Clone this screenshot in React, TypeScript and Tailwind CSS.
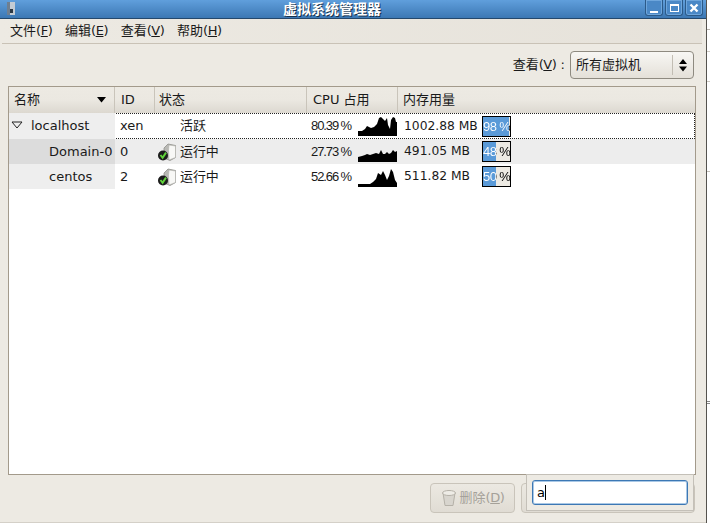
const cjk = "font-['DejaVu_Sans','Noto_Sans_CJK_SC',sans-serif]";

function Mnemonic({ k }: { k: string }) {
  return (
    <span className="tracking-[-0.4px]">
      (<span className="underline">{k}</span>)
    </span>
  );
}

function Menu({ zh, k }: { zh: string; k: string }) {
  return (
    <span className="text-[13px] text-[#1a1a1a] whitespace-nowrap">
      {zh}
      <Mnemonic k={k} />
    </span>
  );
}

function Spark({ points }: { points: string }) {
  return (
    <svg width="39" height="20" viewBox="0 0 39 20" className="block">
      <polygon points={points} fill="#000" />
    </svg>
  );
}

function ServerIcon() {
  return (
    <svg width="18" height="18" viewBox="0 0 18 18" className="block shrink-0">
      <path d="M6 5 L10 1 L17.5 2.5 L17.5 14.5 L12 17.5 L6 15 Z" fill="#b9b9b5" stroke="#8f8f8a" strokeWidth="0.8" />
      <path d="M10.5 7 L11 2 L17.5 3 L17.5 14.5 L11 17 Z" fill="#f8f8f6" stroke="#b0b0ab" strokeWidth="0.6" />
      <circle cx="5" cy="12.5" r="5" fill="#1c1c1c" />
      <path d="M2.5 12 L4.6 14.8 L8 9.6" fill="none" stroke="#5fd13a" strokeWidth="2" />
    </svg>
  );
}

function Bar({ pct, label }: { pct: number; label: string }) {
  return (
    <div
      className="w-[29px] h-[21px] border border-black text-[13px] leading-[19px] text-center whitespace-nowrap font-['Liberation_Sans',sans-serif] tracking-[-0.6px]"
      style={{ background: `linear-gradient(to right, #5a9ad8 ${pct}%, #edeae3 ${pct}%)` }}
    >
      <div
        className="bg-clip-text text-transparent"
        style={{ backgroundImage: `linear-gradient(to right, #fff ${pct}%, #000 ${pct}%)` }}
      >
        {label}
      </div>
    </div>
  );
}

const rows = [
  {
    name: "localhost", indent: "pl-[22px]", id: "xen", status: "活跃", icon: false, cpu: "80.39 %",
    mem: "1002.88 MB", pct: 96, label: "98 %",
    rowBg: "bg-white", nameBg: "bg-[#eeeeee]", h: "h-[26px]", focus: true,
    spark: "0,20 0,15 4,15 7,13 9,10 11,11 13,12 16,11 19,8 21,2 23,1 25,3 27,5 29,2 30,9 32,13 33,4 35,1 37,2 38,6 39,6 39,20",
  },
  {
    name: "Domain-0", indent: "pl-[40px]", id: "0", status: "运行中", icon: true, cpu: "27.73 %",
    mem: "491.05 MB", pct: 48, label: "48 %",
    rowBg: "bg-[#ededed]", nameBg: "bg-[#dcdcdc]", h: "h-[25px]", focus: false,
    spark: "0,20 0,15 4,14 7,13 9,12 12,13 15,12 18,11 21,12 23,8 25,12 27,12 29,10 31,12 33,11 35,8 37,10 39,9 39,20",
  },
  {
    name: "centos", indent: "pl-[40px]", id: "2", status: "运行中", icon: true, cpu: "52.66 %",
    mem: "511.82 MB", pct: 50, label: "50 %",
    rowBg: "bg-white", nameBg: "bg-[#eeeeee]", h: "h-[25px]", focus: false,
    spark: "0,20 0,17 12,17 15,15 18,12 20,6 23,8 25,4 27,8 29,13 31,9 33,2 35,5 37,13 39,16 39,20",
  },
];

const gridCols = "grid grid-cols-[106px_40px_152px_91px_1fr]";

export default function App() {
  return (
    <div className={`relative w-[710px] h-[523px] bg-white overflow-hidden flex ${cjk}`}>
      <div className="w-[706px] h-full bg-[#edeae3] flex flex-col border-b border-b-[#d4d0c8] shrink-0">
        {/* title bar */}
        <div className="h-[19px] shrink-0 flex items-center relative pr-[42px] bg-gradient-to-b from-[#609fdc] to-[#3c78b4] border-b border-b-[#24486c]">
          <svg width="12" height="14" viewBox="0 0 12 14" className="absolute left-[5px] top-[1px]">
            <rect x="2" y="1" width="8" height="13" fill="#c4ccd4" />
            <rect x="2" y="1" width="3" height="13" fill="#6f7f90" />
            <rect x="5" y="8" width="3" height="4" fill="#2c3844" />
          </svg>
          <div className="flex-1 text-center text-white font-bold text-[14px] leading-[17px] [text-shadow:1px_1px_0_#16304a]">虚拟系统管理器</div>
          <div className="absolute right-[3px] top-0 flex gap-[2px]">
            {["min", "max", "close"].map((b) => (
              <div key={b} className="w-[18px] h-[16px] rounded-b-[3px] border border-t-0 border-[#2c5a88] bg-[#4a88c6] shadow-[inset_0_0_0_1px_#6ea6dc] flex items-center justify-center">
                {b === "min" && <div className="w-[8px] h-[2px] bg-white mt-[8px]" />}
                {b === "max" && <div className="w-[9px] h-[8px] border border-white border-t-2" />}
                {b === "close" && (
                  <svg width="10" height="10" viewBox="0 0 10 10">
                    <path d="M1.5 1.5 L8.5 8.5 M8.5 1.5 L1.5 8.5" stroke="#fff" strokeWidth="2.4" />
                  </svg>
                )}
              </div>
            ))}
          </div>
        </div>

        {/* menu bar */}
        <div className="h-[25px] shrink-0 ml-[2px] mr-[4px] flex items-center gap-[12.5px] pl-[8px] bg-gradient-to-r from-[#edeae3] to-[#e6e2da] border-b border-b-[#c9c2b6]">
          <Menu zh="文件" k="F" />
          <Menu zh="编辑" k="E" />
          <Menu zh="查看" k="V" />
          <Menu zh="帮助" k="H" />
        </div>

        {/* view filter */}
        <div className="h-[42px] shrink-0 flex items-center justify-end pr-[12px] gap-[5px]">
          <span className="text-[13px] text-[#1a1a1a] whitespace-nowrap">
            查看<Mnemonic k="V" /> :
          </span>
          <div className="w-[124px] h-[28px] rounded-[4px] border border-[#8e8a80] bg-gradient-to-b from-[#f8f7f4] to-[#e4e0d8] flex items-center text-[13px] text-[#1a1a1a]">
            <span className="flex-1 pl-[5px]">所有虚拟机</span>
            <div className="w-px h-[20px] bg-[#c2bdb3]" />
            <svg width="20" height="16" viewBox="0 0 20 16" className="shrink-0">
              <path d="M10 2 L14 7 L6 7 Z M6 9.5 L14 9.5 L10 14.5 Z" fill="#000" />
            </svg>
          </div>
        </div>

        {/* tree */}
        <div className="ml-[8px] mr-[10px] h-[389px] shrink-0 border border-[#a39a8b] bg-white flex flex-col">
          <div className={`${gridCols} h-[26px] shrink-0 bg-gradient-to-b from-[#edeae3] via-[#ebe8e1] to-[#dcd8d0] text-[13px] text-[#1a1a1a]`}>
            <div className="flex items-center justify-between pl-[5px] pr-[8px] border-r border-r-[#c9c4ba]">
              <span>名称</span>
              <svg width="9" height="6" viewBox="0 0 9 6"><path d="M0 0 H9 L4.5 5.5 Z" fill="#000" /></svg>
            </div>
            <div className="flex items-center pl-[6px] border-r border-r-[#c9c4ba]">ID</div>
            <div className="flex items-center pl-[4px] border-r border-r-[#c9c4ba]">状态</div>
            <div className="flex items-center pl-[6px] border-r border-r-[#c9c4ba]">CPU 占用</div>
            <div className="flex items-center pl-[5px]">内存用量</div>
          </div>

          {rows.map((r) => (
            <div key={r.name} className={`${gridCols} ${r.rowBg} ${r.h} relative items-stretch text-[13px] text-[#1a1a1a]`}>
              {r.focus && <div className="absolute inset-0 border border-dotted border-[#222] pointer-events-none" />}
              <div className={`${r.nameBg} ${r.indent} flex items-center relative`}>
                {r.focus && (
                  <svg width="12" height="8" viewBox="0 0 12 8" className="absolute left-[2px] top-[8px]">
                    <path d="M1 1 H11 L6 7 Z" fill="none" stroke="#222" strokeWidth="1" />
                  </svg>
                )}
                <span className="whitespace-nowrap">{r.name}</span>
              </div>
              <div className="flex items-center pl-[5px]">{r.id}</div>
              <div className={`flex items-center ${r.icon ? "pl-[3px] gap-[4px]" : "pl-[25px]"}`}>
                {r.icon && <ServerIcon />}
                <span className={r.icon ? "tracking-[-0.1px]" : ""}>{r.status}</span>
              </div>
              <div className="flex items-center pl-[4px] gap-[9px]">
                <span className="w-[38px] text-right whitespace-nowrap text-[13px] tracking-[-1.1px] font-['Liberation_Sans',sans-serif]">{r.cpu}</span>
                <Spark points={r.spark} />
              </div>
              <div className="flex items-center pl-[6px] gap-[5px]">
                <span className="w-[73px] whitespace-nowrap text-[12.3px]">{r.mem}</span>
                <Bar pct={r.pct} label={r.label} />
              </div>
            </div>
          ))}
        </div>

        {/* buttons */}
        <div className="flex-1 flex justify-end items-start pt-[8px] pr-[11px] gap-[6px]">
          <div className="w-[85px] h-[30px] rounded-[4px] border border-[#c9c4ba] bg-gradient-to-b from-[#ece9e2] to-[#e0dcd4] flex items-center justify-center gap-[3px] text-[13px] text-[#a5a199]">
            <svg width="16" height="18" viewBox="0 0 16 18" className="shrink-0">
              <path d="M2 4 L4 16.5 H12 L14 4 Z" fill="#d8d5ce" stroke="#b5b1a8" />
              <ellipse cx="8" cy="4" rx="6.5" ry="2.5" fill="#eeece6" stroke="#b5b1a8" />
            </svg>
            <span className="whitespace-nowrap">
              删除<Mnemonic k="D" />
            </span>
          </div>
          <div className="w-[174px] h-[30px] rounded-[4px] border border-[#c9c4ba] bg-gradient-to-b from-[#ece9e2] to-[#e0dcd4]" />
        </div>
      </div>
      <div className="w-px h-full bg-[#55534e] shrink-0" />
      <div className="flex-1 flex flex-col">
        <div className="h-[30px] border-b border-[#b9b5ae]" />
        <div className="h-[22px] border-b border-[#d0ccc5]" />
        <div className="h-[30px] border-b border-[#d0ccc5]" />
        <div className="h-[90px] border-b border-[#c4c0b9]" />
        <div className="h-[229px]" />
        <div className="h-[3px] border-y border-dashed border-[#888]" />
      </div>

      {/* search popup */}
      <div className="absolute left-[526px] top-[474px] w-[168px] h-[37px] bg-[#edeae3] border border-[#c4c0b8] flex items-center justify-center">
        <div className="w-[156px] h-[25px] rounded-[3px] border border-[#3d78b4] bg-white shadow-[inset_0_0_0_1px_#a9c8e6] flex items-center pl-[4px] text-[13px] text-black">
          a<span className="w-px h-[15px] bg-black" />
        </div>
      </div>
    </div>
  );
}
